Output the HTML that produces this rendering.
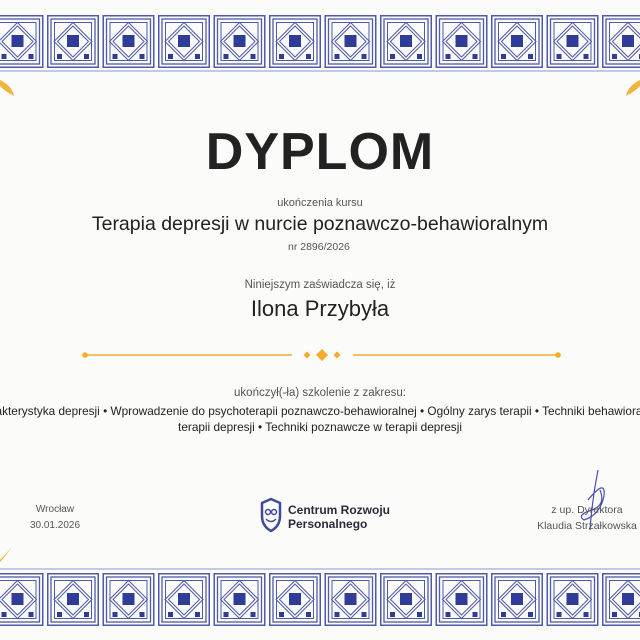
<!DOCTYPE html>
<html><head><meta charset="utf-8"><style>
html,body{margin:0;padding:0}
body{width:640px;height:640px;position:relative;overflow:hidden;background:#fbfbfa;font-family:"Liberation Sans",sans-serif;color:#333}
.t{position:absolute;left:0;width:640px;text-align:center;white-space:nowrap}
</style></head><body>
<svg width="640" height="640" style="position:absolute;left:0;top:0">
<defs>
<g id="tile" fill="none" stroke="#4f5aa8">
<rect x="0.75" y="0.75" width="50.5" height="51.5" stroke-width="1.5"/>
<rect x="4" y="4" width="44" height="45" stroke-width="1.3"/>
<rect x="7.5" y="7.5" width="37" height="38" stroke-width="1"/>
<path d="M26 7.5 L45 26.5 L26 45.5 L7 26.5Z" stroke-width="1"/>
<path d="M26 11 L41.5 26.5 L26 42 L10.5 26.5Z" stroke-width="1"/>
<rect x="20" y="20" width="12" height="12" fill="#2f3d99" stroke="none"/>
<rect x="10" y="39" width="5" height="5" fill="#2f3d99" stroke="none"/>
<rect x="37" y="39" width="5" height="5" fill="#2f3d99" stroke="none"/>
</g>
<g id="row">
<use href="#tile" x="-8.5"/><use href="#tile" x="47"/><use href="#tile" x="102.5"/><use href="#tile" x="158"/><use href="#tile" x="213.5"/><use href="#tile" x="269"/><use href="#tile" x="324.5"/><use href="#tile" x="380"/><use href="#tile" x="435.5"/><use href="#tile" x="491"/><use href="#tile" x="546.5"/><use href="#tile" x="602"/>
</g>
</defs>
<use href="#row" y="15"/>
<line x1="0" y1="71" x2="640" y2="71" stroke="#8f96c8" stroke-width="1"/>
<line x1="0" y1="569" x2="640" y2="569" stroke="#8f96c8" stroke-width="1"/>
<use href="#row" y="573"/>
<path d="M0 80 Q12 86 14 96 Q6 92 0 86Z" fill="#f0b43a"/>
<path d="M640 80 Q628 86 626 96 Q634 92 640 86Z" fill="#f0b43a"/>
<path d="M0 560 Q8 552 12 546 Q6 556 0 562Z" fill="#f0b43a"/>
<g fill="#f4ac2c" stroke="#f4ac2c">
<line x1="85" y1="355" x2="292" y2="355" stroke-width="1.5"/>
<line x1="353" y1="355" x2="558" y2="355" stroke-width="1.5"/>
<circle cx="85" cy="355" r="2.8" stroke="none"/><circle cx="558" cy="355" r="2.8" stroke="none"/>
<path d="M307 351.5l3.5 3.5-3.5 3.5-3.5-3.5z" stroke="none"/>
<path d="M322 349l6 6-6 6-6-6z" stroke="none"/>
<path d="M337 351.5l3.5 3.5-3.5 3.5-3.5-3.5z" stroke="none"/>
</g>
<g fill="none" stroke="#3d4a9e" stroke-width="2.5" stroke-linejoin="round">
<path d="M262 503 L271 499 L280 503 L280 516 Q280 526 271 531 Q262 526 262 516Z"/>
</g>
<g fill="none" stroke="#3d4a9e" stroke-width="1.5">
<circle cx="268" cy="512" r="2.5"/><circle cx="274" cy="512" r="2.5"/>
<path d="M266 519 Q271 524 276 519"/>
</g>
<path d="M598 470 Q592 500 590 530 M588 500 Q606 478 604 496 Q600 515 584 520 Q576 515 592 510 Q606 505 600 490" fill="none" stroke="#4a4fb0" stroke-width="1.2"/>
</svg>
<div class="t" style="top:122px;font-size:52px;font-weight:bold;color:#222;letter-spacing:1px">DYPLOM</div>
<div class="t" style="top:197px;font-size:11px;color:#555">ukończenia kursu</div>
<div class="t" style="top:213px;font-size:19.5px;color:#222">Terapia depresji w nurcie poznawczo-behawioralnym</div>
<div style="position:absolute;left:288px;top:241px;font-size:10.5px;color:#555">nr 2896/2026</div>
<div class="t" style="top:279px;font-size:11.5px;color:#555">Niniejszym zaświadcza się, iż</div>
<div class="t" style="top:296px;font-size:22px;color:#222">Ilona Przybyła</div>
<div class="t" style="top:387px;font-size:11.5px;color:#555">ukończył(-ła) szkolenie z zakresu:</div>
<div class="t" style="top:404px;font-size:11.8px;color:#222;left:-80px;width:800px">Charakterystyka depresji • Wprowadzenie do psychoterapii poznawczo-behawioralnej • Ogólny zarys terapii • Techniki behawioralne w</div>
<div class="t" style="top:420px;font-size:11.8px;color:#222">terapii depresji • Techniki poznawcze w terapii depresji</div>
<div style="position:absolute;left:20px;width:70px;text-align:center;top:502px;font-size:10px;color:#555;line-height:16px">Wrocław<br>30.01.2026</div>
<div style="position:absolute;left:288px;top:503px;font-size:12px;font-weight:bold;color:#2a2a3a;line-height:14px">Centrum Rozwoju<br>Personalnego</div>
<div style="position:absolute;left:532px;width:110px;text-align:center;top:502px;font-size:10.5px;color:#555;line-height:16px">z up. Dyrektora<br>Klaudia Strzałkowska</div>
</body></html>
